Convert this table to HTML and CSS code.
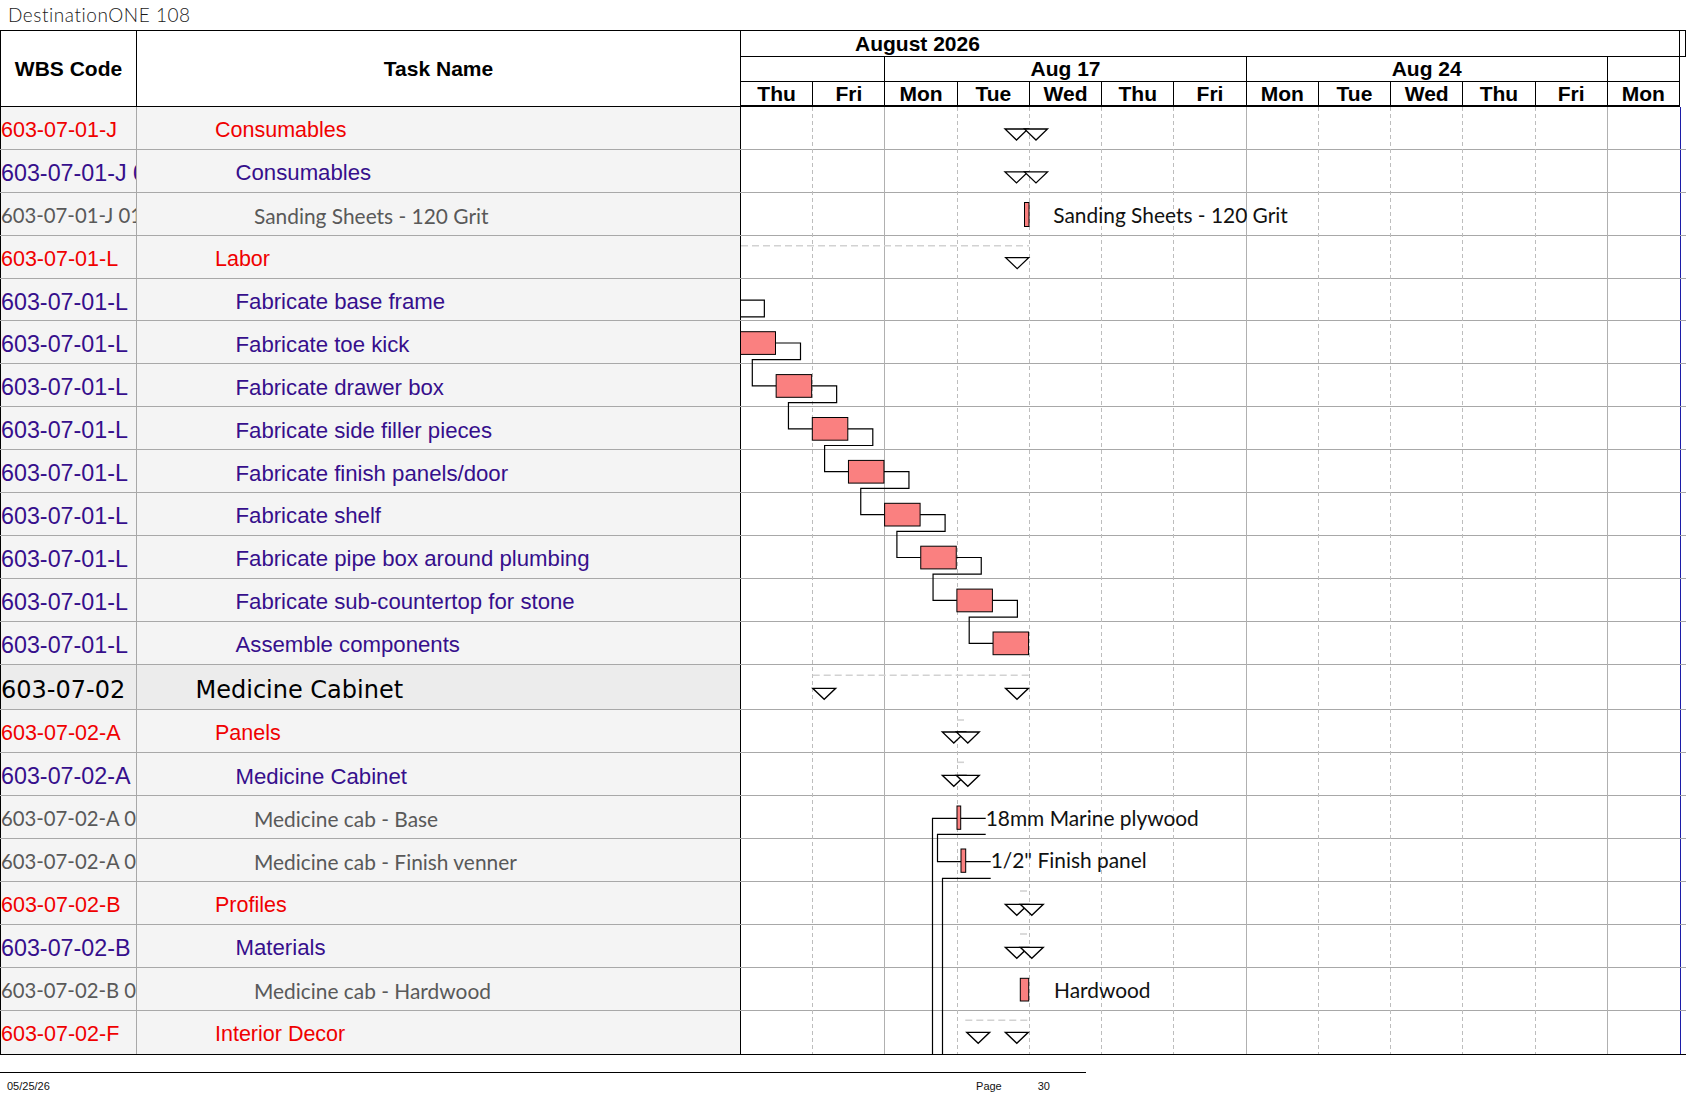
FILE: index.html
```html
<!DOCTYPE html>
<html lang="en">
<head>
<meta charset="utf-8">
<title>DestinationONE 108 - Gantt</title>
<link rel="stylesheet" href="styles.css">
</head>
<body>
<div class="doc-title">DestinationONE 108</div>

<div class="sheet">
  <div class="head">
    <div class="h-cell h-wbs">WBS Code</div>
    <div class="h-cell h-task">Task Name</div>
    <div class="tl-head">
      <div class="month">August 2026</div>
      <div class="month-gut"></div>
      <div class="week span2"></div>
      <div class="week span5">Aug 17</div>
      <div class="week span5">Aug 24</div>
      <div class="week span1"></div>
      <div class="head-gut"></div>
      <div class="day">Thu</div>
      <div class="day">Fri</div>
      <div class="day">Mon</div>
      <div class="day">Tue</div>
      <div class="day">Wed</div>
      <div class="day">Thu</div>
      <div class="day">Fri</div>
      <div class="day">Mon</div>
      <div class="day">Tue</div>
      <div class="day">Wed</div>
      <div class="day">Thu</div>
      <div class="day">Fri</div>
      <div class="day">Mon</div>
    </div>
  </div>

  <div class="rows">
    <div class="row l1"><div class="wbs">603-07-01-J</div><div class="task">Consumables</div><div class="tl"></div><div class="gut"></div></div>
    <div class="row l2"><div class="wbs">603-07-01-J 01</div><div class="task">Consumables</div><div class="tl"></div><div class="gut"></div></div>
    <div class="row l3"><div class="wbs">603-07-01-J 0101</div><div class="task">Sanding Sheets - 120 Grit</div><div class="tl"></div><div class="gut"></div></div>
    <div class="row l1"><div class="wbs">603-07-01-L</div><div class="task">Labor</div><div class="tl"></div><div class="gut"></div></div>
    <div class="row l2"><div class="wbs">603-07-01-L</div><div class="task">Fabricate base frame</div><div class="tl"></div><div class="gut"></div></div>
    <div class="row l2"><div class="wbs">603-07-01-L</div><div class="task">Fabricate toe kick</div><div class="tl"></div><div class="gut"></div></div>
    <div class="row l2"><div class="wbs">603-07-01-L</div><div class="task">Fabricate drawer box</div><div class="tl"></div><div class="gut"></div></div>
    <div class="row l2"><div class="wbs">603-07-01-L</div><div class="task">Fabricate side filler pieces</div><div class="tl"></div><div class="gut"></div></div>
    <div class="row l2"><div class="wbs">603-07-01-L</div><div class="task">Fabricate finish panels/door</div><div class="tl"></div><div class="gut"></div></div>
    <div class="row l2"><div class="wbs">603-07-01-L</div><div class="task">Fabricate shelf</div><div class="tl"></div><div class="gut"></div></div>
    <div class="row l2"><div class="wbs">603-07-01-L</div><div class="task">Fabricate pipe box around plumbing</div><div class="tl"></div><div class="gut"></div></div>
    <div class="row l2"><div class="wbs">603-07-01-L</div><div class="task">Fabricate sub-countertop for stone</div><div class="tl"></div><div class="gut"></div></div>
    <div class="row l2"><div class="wbs">603-07-01-L</div><div class="task">Assemble components</div><div class="tl"></div><div class="gut"></div></div>
    <div class="row l0"><div class="wbs">603-07-02</div><div class="task">Medicine Cabinet</div><div class="tl"></div><div class="gut"></div></div>
    <div class="row l1"><div class="wbs">603-07-02-A</div><div class="task">Panels</div><div class="tl"></div><div class="gut"></div></div>
    <div class="row l2"><div class="wbs">603-07-02-A</div><div class="task">Medicine Cabinet</div><div class="tl"></div><div class="gut"></div></div>
    <div class="row l3"><div class="wbs">603-07-02-A 01</div><div class="task">Medicine cab - Base</div><div class="tl"></div><div class="gut"></div></div>
    <div class="row l3"><div class="wbs">603-07-02-A 02</div><div class="task">Medicine cab - Finish venner</div><div class="tl"></div><div class="gut"></div></div>
    <div class="row l1"><div class="wbs">603-07-02-B</div><div class="task">Profiles</div><div class="tl"></div><div class="gut"></div></div>
    <div class="row l2"><div class="wbs">603-07-02-B</div><div class="task">Materials</div><div class="tl"></div><div class="gut"></div></div>
    <div class="row l3"><div class="wbs">603-07-02-B 01</div><div class="task">Medicine cab - Hardwood</div><div class="tl"></div><div class="gut"></div></div>
    <div class="row l1 last"><div class="wbs">603-07-02-F</div><div class="task">Interior Decor</div><div class="tl"></div><div class="gut"></div></div>

    <svg class="chart" viewBox="741 107 939 947" width="939" height="947" xmlns="http://www.w3.org/2000/svg">
      <g class="grid-dash">
        <line x1="812.5" y1="107" x2="812.5" y2="1054"/>
        <line x1="957.5" y1="107" x2="957.5" y2="1054"/>
        <line x1="1029.5" y1="107" x2="1029.5" y2="1054"/>
        <line x1="1101.5" y1="107" x2="1101.5" y2="1054"/>
        <line x1="1173.5" y1="107" x2="1173.5" y2="1054"/>
        <line x1="1318.5" y1="107" x2="1318.5" y2="1054"/>
        <line x1="1390.5" y1="107" x2="1390.5" y2="1054"/>
        <line x1="1462.5" y1="107" x2="1462.5" y2="1054"/>
        <line x1="1535.5" y1="107" x2="1535.5" y2="1054"/>
      </g>
      <g class="grid-solid">
        <line x1="884.5" y1="107" x2="884.5" y2="1054"/>
        <line x1="1246.5" y1="107" x2="1246.5" y2="1054"/>
        <line x1="1607.5" y1="107" x2="1607.5" y2="1054"/>
      </g>

      <g class="sum-line">
        <line x1="741" y1="245.7" x2="1029" y2="245.7"/>
        <line x1="812.7" y1="675.3" x2="1029.3" y2="675.3"/>
        <line x1="965.3" y1="1020.3" x2="1029.3" y2="1020.3"/>
        <line x1="957" y1="720" x2="967" y2="720"/>
        <line x1="957" y1="762.3" x2="967" y2="762.3"/>
        <line x1="1020" y1="891" x2="1028" y2="891"/>
        <line x1="1020" y1="934" x2="1028" y2="934"/>
      </g>

      <g class="conn">
        <path d="M703.85 300.1 H764.35 V316.8 H716.15 V343 H741"/>
        <path d="M775.5 343 H800.5 V359.7 H752.3 V385.9 H776.15"/>
        <path d="M811.65 385.9 H836.65 V402.6 H788.45 V428.8 H812.3"/>
        <path d="M847.8 428.8 H872.8 V445.5 H824.6 V471.7 H848.45"/>
        <path d="M883.95 471.7 H908.95 V488.4 H860.75 V514.6 H884.6"/>
        <path d="M920.1 514.6 H945.1 V531.3 H896.9 V557.5 H920.75"/>
        <path d="M956.25 557.5 H981.25 V574.2 H933.05 V600.4 H956.9"/>
        <path d="M992.4 600.4 H1017.4 V617.1 H969.2 V643.3 H993.05"/>
        <path d="M985.7 818.3 H932.5 V1054"/>
        <path d="M985.7 834.3 H937.5 V861.7 H990.7"/>
        <path d="M990.7 878.3 H942.5 V1054"/>
      </g>

      <g class="bar">
        <rect x="740" y="331.7" width="35.5" height="22.7"/>
        <rect x="776.15" y="374.6" width="35.5" height="22.7"/>
        <rect x="812.3" y="417.5" width="35.5" height="22.7"/>
        <rect x="848.45" y="460.4" width="35.5" height="22.7"/>
        <rect x="884.6" y="503.3" width="35.5" height="22.7"/>
        <rect x="920.75" y="546.2" width="35.5" height="22.7"/>
        <rect x="956.9" y="589.1" width="35.5" height="22.7"/>
        <rect x="993.05" y="632" width="35.5" height="22.7"/>
        <rect x="1024.5" y="202.5" width="4.5" height="24"/>
        <rect x="957" y="806" width="3.7" height="23.3"/>
        <rect x="961" y="849" width="4.7" height="23.3"/>
        <rect x="1020.3" y="978.3" width="8.4" height="22.7"/>
      </g>

      <g class="tri">
        <path d="M1005 129 h23 l-11.5 11 z"/>
        <path d="M1024.5 129 h23 l-11.5 11 z"/>
        <path d="M1005 171.9 h23 l-11.5 11 z"/>
        <path d="M1024.5 171.9 h23 l-11.5 11 z"/>
        <path d="M1005.7 257.7 h23 l-11.5 11 z"/>
        <path d="M812.7 688.3 h23 l-11.5 11 z"/>
        <path d="M1005.5 688.3 h23 l-11.5 11 z"/>
        <path d="M942.3 732 h23 l-11.5 11 z"/>
        <path d="M956.3 732 h23 l-11.5 11 z"/>
        <path d="M942.3 775.3 h23 l-11.5 11 z"/>
        <path d="M956.3 775.3 h23 l-11.5 11 z"/>
        <path d="M1005.3 904.3 h23 l-11.5 11 z"/>
        <path d="M1020.3 904.3 h23 l-11.5 11 z"/>
        <path d="M1005.3 947.3 h23 l-11.5 11 z"/>
        <path d="M1020.3 947.3 h23 l-11.5 11 z"/>
        <path d="M966.7 1032.3 h23 l-11.5 11 z"/>
        <path d="M1005.3 1032.3 h23 l-11.5 11 z"/>
      </g>

      <g class="label">
        <text x="1053.3" y="223">Sanding Sheets - 120 Grit</text>
        <text x="985.7" y="826">18mm Marine plywood</text>
        <text x="990.7" y="868.3">1/2" Finish panel</text>
        <text x="1054" y="997.7">Hardwood</text>
      </g>
    </svg>
  </div>
</div>

<div class="foot">
  <span class="date">05/25/26</span>
  <span class="pg">Page</span>
  <span class="num">30</span>
</div>
</body>
</html>
```

FILE: styles.css
```css
* { box-sizing: border-box; }
html, body { margin: 0; padding: 0; background: #fff; }
body {
  width: 1687px;
  height: 1097px;
  overflow: hidden;
  font-family: "Liberation Sans", Arial, sans-serif;
  color: #000;
}

.doc-title {
  height: 30px;
  line-height: 30px;
  padding-left: 8px;
  font-family: Lato, "Open Sans", sans-serif;
  font-weight: 300;
  font-size: 19px;
  letter-spacing: 0.55px;
  color: #1a1a1a;
}

.sheet {
  position: relative;
  width: 1686px;
  border-top: 1px solid #000;
  border-bottom: 1px solid #000;
}

/* ---------- header ---------- */
.head {
  display: grid;
  grid-template-columns: 137px 604px 945px;
  height: 76px;
}
.h-cell {
  display: flex;
  align-items: center;
  justify-content: center;
  font-weight: bold;
  font-size: 21px;
  border-bottom: 1px solid #000;
  border-right: 1px solid #000;
}
.h-wbs { border-left: 1px solid #000; }

.tl-head {
  display: grid;
  grid-template-columns: repeat(13, minmax(0, 1fr)) 6px;
  grid-template-rows: 26px 25px 25px;
  font-weight: bold;
  font-size: 21px;
}
.month {
  grid-column: 1 / 14;
  border-bottom: 1px solid #000;
  border-right: 1px solid #000;
  padding-left: 114px;
  line-height: 25px;
}
.month-gut {
  border-bottom: 1px solid #000;
  border-right: 1px solid #000;
}
.head-gut {
  grid-column: 14;
  grid-row: 2 / 4;
}
.week {
  border-bottom: 1px solid #000;
  border-right: 1px solid #000;
  text-align: center;
  line-height: 24px;
}
.span1 { grid-column: span 1; }
.span2 { grid-column: span 2; }
.span5 { grid-column: span 5; }
.day {
  border-bottom: 2px solid #000;
  border-right: 1px solid #000;
  text-align: center;
  line-height: 23px;
}

/* ---------- rows ---------- */
.rows { position: relative; }
.row {
  display: grid;
  grid-template-columns: 137px 604px 939px 6px;
  height: 42.9px;
  border-bottom: 1px solid #a8a8a8;
}
.row.last { border-bottom: none; height: 43.2px; }
.row > div { display: flex; align-items: center; white-space: nowrap; overflow: hidden; }
.wbs {
  background: #f4f4f4;
  border-left: 1px solid #000;
  border-right: 1px solid #a8a8a8;
  padding-left: 0;
}
.task {
  background: #f4f4f4;
  border-right: 1px solid #000;
}
.tl { background: #fff; }
.gut { border-left: 1px solid #1c1ca8; }

.l1 { color: #f00000; }
.l1 .wbs { font-size: 21.5px; padding-top: 5px; }
.l1 .task { font-size: 21.5px; padding-left: 78px; padding-top: 5px; }

.l2 { color: #360f8c; }
.l2 .wbs { font-size: 23.3px; padding-top: 5px; }
.l2 .task { font-size: 22.2px; padding-left: 98.5px; padding-top: 5px; }

.l3 { color: #595959; font-family: Lato, "Open Sans", sans-serif; }
.l3 .wbs { font-size: 20.3px; padding-top: 3px; }
.l3 .task { font-size: 20.9px; padding-left: 117px; padding-top: 3px; }

.l0 { height: 45.7px; color: #000; font-family: "DejaVu Sans", Verdana, sans-serif; }
.l0 .wbs, .l0 .task { background: #ececec; font-size: 24px; padding-top: 7px; }
.l0 .task { padding-left: 58.5px; }

/* ---------- chart overlay ---------- */
.chart {
  position: absolute;
  left: 741px;
  top: 0;
  overflow: hidden;
}
.grid-dash line { stroke: #bdbdbd; stroke-width: 1; stroke-dasharray: 4 3; }
.grid-solid line { stroke: #b0b0b0; stroke-width: 1; }
.sum-line line { stroke: #d2d2d2; stroke-width: 1.6; stroke-dasharray: 7 4; }
.conn path { fill: none; stroke: #000; stroke-width: 1.2; }
.bar rect { fill: #fa8080; stroke: #000; stroke-width: 1; }
.tri path { fill: #fff; stroke: #000; stroke-width: 1.3; stroke-linejoin: miter; }
.label text {
  font-family: Lato, "Open Sans", sans-serif;
  font-size: 20.9px;
  fill: #111;
}

/* ---------- footer ---------- */
.foot {
  width: 1086px;
  margin-top: 17px;
  border-top: 1px solid #000;
  display: flex;
  padding: 7px 36px 0 7px;
  font-size: 11px;
  line-height: 13px;
  color: #111;
}
.pg { margin-left: auto; margin-right: 36px; }
```
